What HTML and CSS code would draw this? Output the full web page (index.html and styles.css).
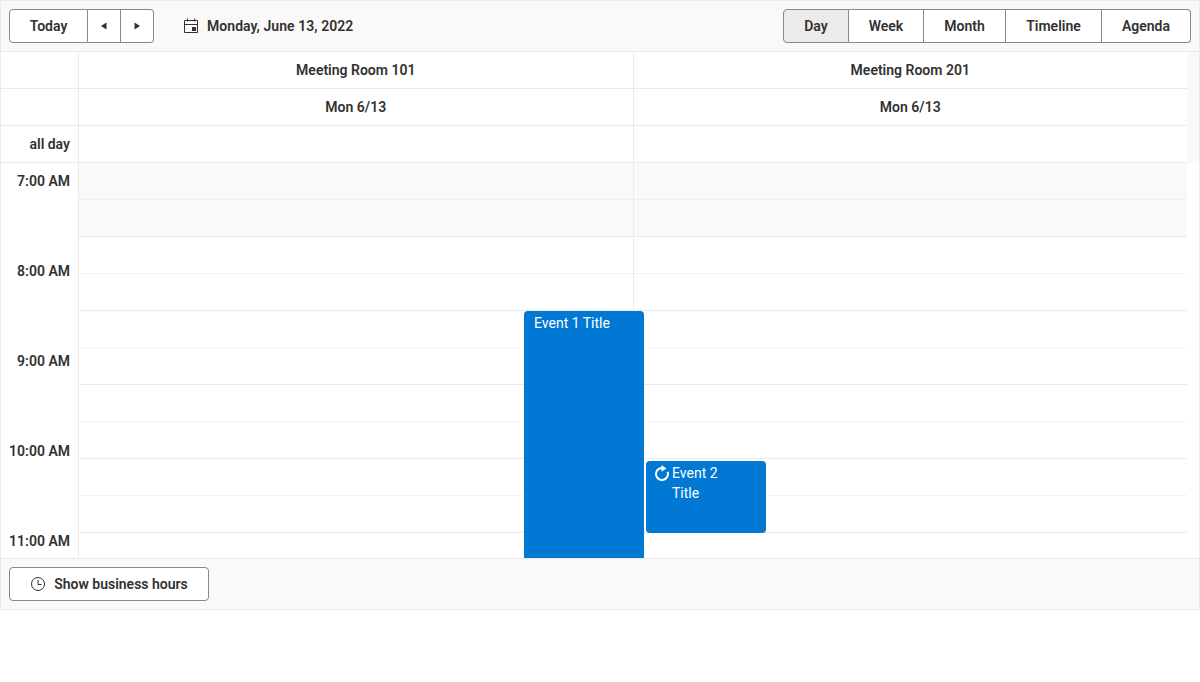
FILE: index.html
```html
<!doctype html>
<html lang="en">
    <head>
        <meta charset="utf8">
        <link rel="stylesheet" href="styles.css">
    </head>
    <body>
        <main class="scheduler">
            <header class="toolbar">
                <div class="btn-group">
                    <button class="btn btn-today">Today</button>
                    <button class="btn btn-arrow">
                        <svg width="8" height="8" viewBox="0 0 8 8"><path d="M6.500 0.500v7L1 4z"/></svg>
                    </button>
                    <button class="btn btn-arrow">
                        <svg width="8" height="8" viewBox="0 0 8 8"><path d="M1.500 0.500v7L7 4z"/></svg>
                    </button>
                </div>
                <div class="date-nav">
                    <svg width="16" height="16" viewBox="0 0 16 16" fill="none" stroke="#323130">
                        <path d="M1.500 2.500h13v12h-13zM1.500 6.500h13M4.500 0.500v3M11.500 0.500v3"/>
                        <rect x="9" y="9" width="4" height="4" fill="#323130" stroke="none"/>
                    </svg>
                    <span>Monday, June 13, 2022</span>
                </div>
                <div class="btn-group views">
                    <button class="btn btn-day active">Day</button>
                    <button class="btn btn-week">Week</button>
                    <button class="btn btn-month">Month</button>
                    <button class="btn btn-timeline">Timeline</button>
                    <button class="btn btn-agenda">Agenda</button>
                </div>
            </header>

            <div class="head-row">
                <div class="corner"></div>
                <div class="head-cell">Meeting Room 101</div>
                <div class="head-cell">Meeting Room 201</div>
            </div>
            <div class="head-row">
                <div class="corner"></div>
                <div class="head-cell">Mon 6/13</div>
                <div class="head-cell">Mon 6/13</div>
            </div>
            <div class="head-row">
                <div class="corner all-day">all day</div>
                <div class="head-cell"></div>
                <div class="head-cell"></div>
            </div>

            <div class="content">
                <div class="times">
                    <div class="time">7:00 AM</div>
                    <div class="time">8:00 AM</div>
                    <div class="time">9:00 AM</div>
                    <div class="time">10:00 AM</div>
                    <div class="time">11:00 AM</div>
                </div>
                <div class="slots">
                    <div class="slot off minor"></div>
                    <div class="slot off"></div>
                    <div class="slot minor"></div>
                    <div class="slot"></div>
                    <div class="slot minor"></div>
                    <div class="slot"></div>
                    <div class="slot minor"></div>
                    <div class="slot"></div>
                    <div class="slot minor"></div>
                    <div class="slot"></div>
                    <div class="slot minor"></div>
                    <div class="col-line"></div>
                    <div class="event event-one">Event 1 Title</div>
                    <div class="event event-two">
                        <svg width="16" height="16" viewBox="0 0 16 16" fill="none" stroke="#fff" stroke-width="2">
                            <path d="M8 3A6 6 0 1 0 13.600 6.900"/>
                            <path d="M7.500 0v6.800l5-3.400z" fill="#fff" stroke="none"/>
                        </svg>
                        <span>Event 2<br>Title</span>
                    </div>
                </div>
            </div>

            <footer class="footer">
                <button class="btn btn-hours">
                    <svg width="16" height="16" viewBox="0 0 16 16" fill="none" stroke="#323130">
                        <circle cx="8" cy="8" r="6.500"/>
                        <path d="M8 4v4.500h3.500"/>
                    </svg>
                    Show business hours
                </button>
            </footer>
        </main>
    </body>
</html>
```

FILE: styles.css
```css
html {
    min-height: 100%;
}
body {
    background-color: #fff;
    color: #323130;
    font-family: Roboto, "Noto Sans", sans-serif;
    font-size: 14px;
    margin: 0;
}
.scheduler {
    border: 1px solid #edebe9;
    box-sizing: border-box;
    display: flex;
    flex-direction: column;
    height: 610px;
}
.toolbar {
    align-items: center;
    background: #faf9f8;
    border-bottom: 1px solid #edebe9;
    box-sizing: border-box;
    display: flex;
    flex: none;
    height: 51px;
    padding: 0 8px;
}
.btn-group {
    display: flex;
}
.btn {
    align-items: center;
    background: #fff;
    border: 1px solid #8a8886;
    border-left-width: 0;
    color: #323130;
    display: flex;
    font-family: inherit;
    font-size: 14px;
    font-weight: 600;
    height: 34px;
    justify-content: center;
    padding: 0;
}
.btn-group .btn:first-child {
    border-left-width: 1px;
    border-radius: 4px 0 0 4px;
}
.btn-group .btn:last-child {
    border-radius: 0 4px 4px 0;
}
.btn.active {
    background: #edebe9;
}
.btn-today { width: 79px; }
.btn-arrow { width: 33px; }
.btn-day { width: 66px; }
.btn-week { width: 75px; }
.btn-month { width: 82px; }
.btn-timeline { width: 96px; }
.btn-agenda { width: 89px; }
.btn-arrow svg {
    fill: #323130;
}
.date-nav {
    align-items: center;
    display: flex;
    font-weight: 600;
    gap: 8px;
    letter-spacing: 0.05px;
    margin-left: 29px;
}
.views {
    margin-left: auto;
}
.head-row {
    border-bottom: 1px solid #edebe9;
    box-sizing: border-box;
    display: flex;
    flex: none;
    font-weight: 600;
    height: 37px;
    padding-right: 12px;
    position: relative;
}
.head-row::after {
    background: #faf9f8;
    bottom: -1px;
    content: " ";
    position: absolute;
    right: 0;
    top: 0;
    width: 12px;
}
.corner {
    border-right: 1px solid #edebe9;
    box-sizing: border-box;
    flex: none;
    line-height: 36px;
    padding-right: 8px;
    text-align: right;
    width: 78px;
}
.head-cell {
    box-sizing: border-box;
    flex: 1;
    line-height: 36px;
    text-align: center;
}
.head-cell + .head-cell {
    border-left: 1px solid #edebe9;
}
.content {
    display: flex;
    flex: 1;
    min-height: 0;
    overflow: hidden;
}
.times {
    border-right: 1px solid #edebe9;
    box-sizing: border-box;
    flex: none;
    font-weight: 600;
    padding-right: 8px;
    text-align: right;
    width: 78px;
}
.time {
    height: 90px;
    line-height: 36px;
}
.slots {
    flex: 1;
    margin-right: 12px;
    position: relative;
}
.slot {
    border-bottom: 1px solid #edebe9;
    box-sizing: border-box;
    height: 37px;
}
.slot.minor {
    border-bottom: 1px dotted #edebe9;
}
.slot.off {
    background: #faf9f8;
}
.col-line {
    background: #edebe9;
    height: 147px;
    left: 554px;
    position: absolute;
    top: 0;
    width: 1px;
}
.event {
    background: #0078d4;
    border-radius: 4px;
    box-sizing: border-box;
    color: #fff;
    line-height: 20px;
    position: absolute;
    width: 120px;
}
.event-one {
    height: 300px;
    left: 445px;
    padding: 2px 10px;
    top: 148px;
}
.event-two {
    display: flex;
    gap: 2px;
    height: 72px;
    left: 567px;
    padding: 2px 8px;
    top: 298px;
}
.event-two svg {
    flex: none;
    margin-top: 2px;
}
.footer {
    align-items: center;
    background: #faf9f8;
    border-top: 1px solid #edebe9;
    box-sizing: border-box;
    display: flex;
    flex: none;
    height: 51px;
    padding: 0 8px;
}
.btn.btn-hours {
    border-left-width: 1px;
    border-radius: 4px;
    gap: 8px;
    width: 200px;
}
```
